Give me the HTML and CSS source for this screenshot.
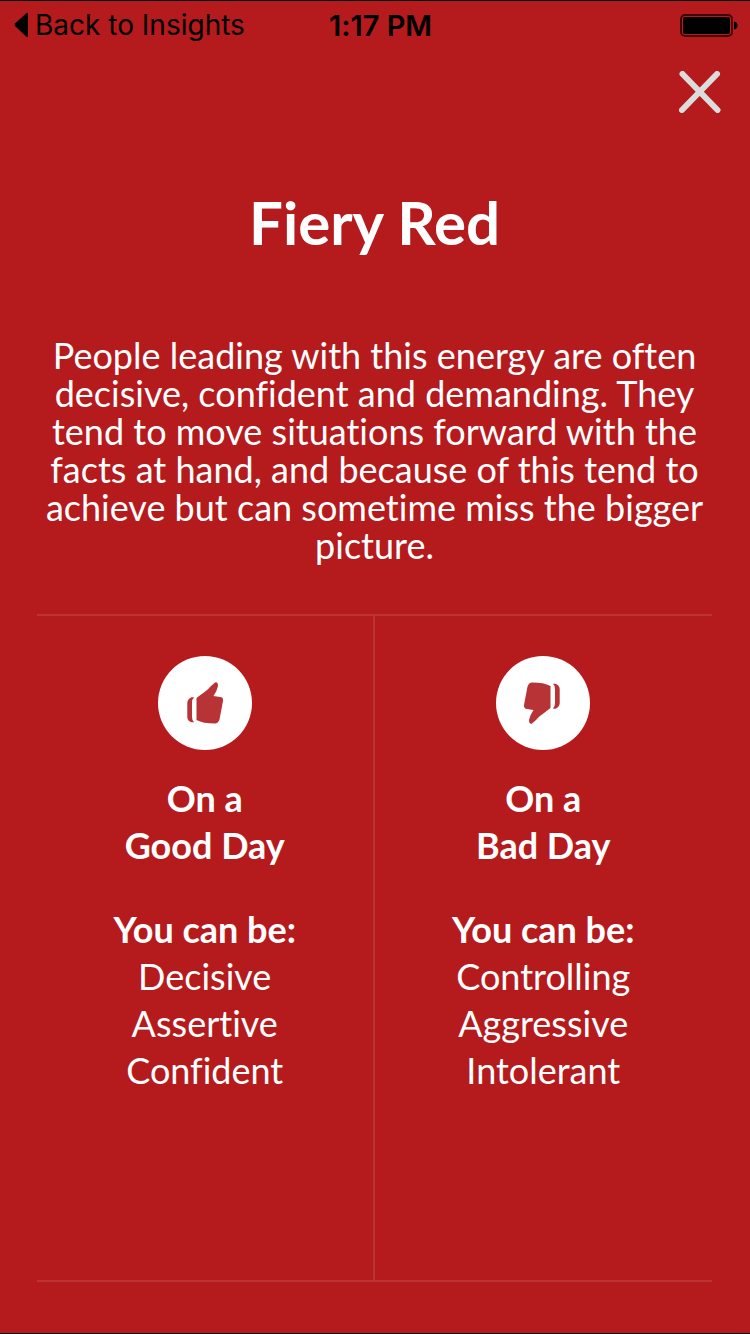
FILE: index.html
```html
<!DOCTYPE html>
<html lang="en">
<head>
<meta charset="utf-8">
<meta name="viewport" content="width=device-width, initial-scale=1">
<title>Fiery Red</title>
<link rel="stylesheet" href="styles.css">
</head>
<body>
<div class="screen">
  <header class="status">
    <a class="back" href="#">
      <svg class="back-icon" width="14" height="26" viewBox="0 0 14 26" aria-hidden="true"><path d="M14 1.500Q14 .2 12.400 1.200L1 11.500Q0 12.700 1 14L12.400 24.800Q14 25.500 14 24.200Z" fill="#000"/></svg>
      <span>Back to Insights</span>
    </a>
    <time class="clock">1:17 PM</time>
    <svg class="battery" width="58" height="24" viewBox="0 0 58 24" role="img" aria-label="Battery full"><rect x="1" y="2" width="51" height="21" rx="4" fill="none" stroke="#420608" stroke-width="2"/><rect x="3" y="4" width="47" height="17" rx="2" fill="#000"/><path d="M54 8.500Q57.500 9 57.500 12.500T54 16.500Z" fill="#000"/></svg>
  </header>
  <nav class="tools">
    <button class="close" type="button" aria-label="Close">
      <svg width="42" height="42" viewBox="0 0 42 42" aria-hidden="true"><path d="M3.500 3 38.500 39M38 3 3 39" fill="none" stroke="#dcdcdc" stroke-width="6" stroke-linecap="round"/></svg>
    </button>
  </nav>
  <main class="content">
    <h1 class="title">Fiery Red</h1>
    <p class="intro">People leading with this energy are often decisive, confident and demanding. They tend to move situations forward with the facts at hand, and because of this tend to achieve but can sometime miss the bigger picture.</p>
    <div class="days">
      <section class="day">
        <svg class="badge" viewBox="0 0 94 94" aria-hidden="true"><circle cx="47" cy="47" r="47" fill="#fff"/><path d="M38.500 42C43 38 49 35 53 30L57 26.500Q60 25.500 60 30Q59 35 55.500 40L63.500 41.300Q65.500 42 65 45L61.500 63.500Q60 67.500 57 67.500C49 67.500 43 66.500 38.500 64Z" fill="#b83335"/><path d="M36 41.500C33 40.300 29.500 43 29.300 47V61C29.500 64.500 32 66.500 36 66.300Q34 64.500 34 61V47Q34 43 36 41.500Z" fill="#b83335"/></svg>
        <h2 class="heading">On a<br>Good Day</h2>
        <h3 class="heading lead">You can be:</h3>
        <ul class="traits"><li>Decisive</li><li>Assertive</li><li>Confident</li></ul>
      </section>
      <section class="day">
        <svg class="badge" viewBox="0 0 94 94" aria-hidden="true"><circle cx="47" cy="47" r="47" fill="#fff"/><g transform="rotate(180 46.500 47)"><path d="M38.500 42C43 38 49 35 53 30L57 26.500Q60 25.500 60 30Q59 35 55.500 40L63.500 41.300Q65.500 42 65 45L61.500 63.500Q60 67.500 57 67.500C49 67.500 43 66.500 38.500 64Z" fill="#b83335"/><path d="M36 41.500C33 40.300 29.500 43 29.300 47V61C29.500 64.500 32 66.500 36 66.300Q34 64.500 34 61V47Q34 43 36 41.500Z" fill="#b83335"/></g></svg>
        <h2 class="heading">On a<br>Bad Day</h2>
        <h3 class="heading lead">You can be:</h3>
        <ul class="traits"><li>Controlling</li><li>Aggressive</li><li>Intolerant</li></ul>
      </section>
    </div>
  </main>
</div>
</body>
</html>
```
FILE: styles.css
```css
* { box-sizing: border-box; }
body { margin: 0; background: #b51a1d; }
.screen {
  min-height: 100vh;
  display: flex;
  flex-direction: column;
  background: #b51a1d;
  border-top: 1px solid #000;
  border-bottom: 1px solid #000;
  color: #fff;
  font-family: Lato, "Open Sans", sans-serif;
  font-variant-ligatures: none;
}
.status {
  display: grid;
  grid-template-columns: 1fr auto 1fr;
  align-items: center;
  height: 48px;
  padding: 0 12px 0 14px;
  color: #000;
  font-family: Inter, sans-serif;
  font-size: 28px;
}
.back { display: flex; align-items: center; gap: 7px; color: inherit; text-decoration: none; white-space: nowrap; }
.clock { font-size: 29px; font-weight: 600; padding-left: 9px; }
.battery { justify-self: end; }
.tools { display: flex; justify-content: flex-end; padding: 19px 26px 0; }
.close { padding: 3px; border: 0; background: none; line-height: 0; cursor: pointer; }
.content { flex: 1; display: flex; flex-direction: column; padding: 0 38px 51px 37px; }
.title { margin: 70px 0 0; font-size: 60px; line-height: 72px; font-weight: 700; text-align: center; }
.intro { margin: 78px 0 0; font-size: 36px; line-height: 38px; text-align: center; }
.days {
  flex: 1;
  display: grid;
  grid-template-columns: 1fr 1fr;
  margin-top: 50px;
  border-top: 2px solid #bc3335;
  border-bottom: 2px solid #bc3335;
}
.day { display: flex; flex-direction: column; align-items: center; padding-top: 40px; text-align: center; font-size: 36px; line-height: 47px; }
.day:first-child { border-right: 2px solid #bc3335; }
.badge { width: 94px; height: 94px; }
.heading { margin: 25px 0 0; font-size: inherit; font-weight: 700; }
.lead { margin-top: 37px; }
.traits { margin: 0; padding: 0; list-style: none; }
```
